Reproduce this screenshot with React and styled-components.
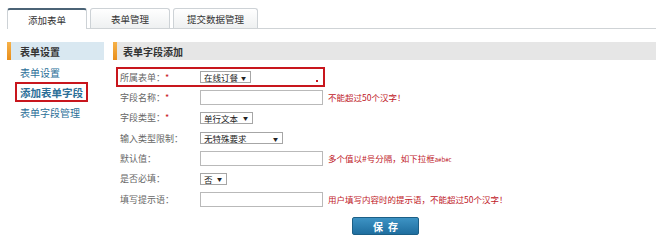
import React from 'react';
import styled, { createGlobalStyle } from 'styled-components';

const GlobalStyle = createGlobalStyle`
  html, body {
    margin: 0;
    padding: 0;
    background: #ffffff;
    font-family: "Noto Sans CJK SC", "Liberation Sans", sans-serif;
  }
`;

const Page = styled.div`
  width: 659px;
  height: 252px;
  overflow: hidden;
  box-sizing: border-box;
  padding: 7px 3px 0 7px;
`;

const TabBar = styled.div`
  display: flex;
  align-items: flex-end;
  gap: 3px;
  height: 21px;
  border-bottom: 1px solid #cfd3d6;
`;

const Tab = styled.div`
  width: ${(p) => p.width}px;
  height: ${(p) => (p.active ? 21 : 20)}px;
  box-sizing: border-box;
  display: flex;
  align-items: center;
  justify-content: center;
  font-size: 9.5px;
  color: #333;
  border: 1px solid #cdd2d6;
  border-top: ${(p) => (p.active ? '2px solid #4b6376' : '1px solid #cdd2d6')};
  border-bottom: none;
  border-radius: 3px 3px 0 0;
  background: ${(p) => (p.active ? '#ffffff' : 'linear-gradient(#ffffff, #eef0f1)')};
  margin-bottom: ${(p) => (p.active ? '-1px' : '0')};
`;

const Body = styled.div`
  display: flex;
  gap: 9px;
  margin-top: 13px;
`;

const Side = styled.div`
  width: 97px;
`;

const Main = styled.div`
  flex: 1;
`;

const Heading = styled.div`
  height: 18px;
  display: flex;
  align-items: center;
  background: ${(p) => p.bg};
  font-size: 10px;
  font-weight: bold;
  color: #333;
  &::before {
    content: '';
    width: 4px;
    height: 100%;
    background: linear-gradient(#f6b24a, #e98e1a);
    margin-right: ${(p) => p.gap}px;
  }
`;

const SideList = styled.div`
  display: flex;
  flex-direction: column;
  padding-top: 2px;
`;

const SideLink = styled.div`
  height: 20px;
  display: flex;
  align-items: center;
  margin-left: 8px;
  width: 73px;
  box-sizing: border-box;
  padding-left: 3px;
  font-size: ${(p) => (p.current ? 10.5 : 10)}px;
  font-weight: ${(p) => (p.current ? 'bold' : 'normal')};
  color: #2b6f98;
  border: 2px solid ${(p) => (p.current ? '#c8161d' : 'transparent')};
`;

const Form = styled.div`
  padding-top: 7px;
`;

const Row = styled.div`
  height: 20.33px;
  box-sizing: border-box;
  display: flex;
  align-items: center;
  margin-left: 3px;
  padding-left: 2px;
  width: ${(p) => (p.boxed ? '209px' : 'auto')};
  border: 2px solid ${(p) => (p.boxed ? '#c8161d' : 'transparent')};
`;

const Label = styled.div`
  width: 80px;
  flex-shrink: 0;
  font-size: 9px;
  color: #666;
  display: flex;
  align-items: center;
`;

const Star = styled.span`
  color: #c8161d;
  margin-left: 0;
  font-size: 9px;
`;

const TextBox = styled.div`
  width: 123px;
  height: 15px;
  box-sizing: border-box;
  border: 1px solid #b9b9b9;
  background: #fff;
`;

const Select = styled.div`
  width: ${(p) => p.width}px;
  height: 12px;
  box-sizing: border-box;
  border: 1px solid #a6a6a6;
  background: #fff;
  display: flex;
  align-items: center;
  justify-content: space-between;
  padding: 0 4px 0 3px;
  font-size: 8.5px;
  color: #222;
  &::after {
    content: '▼';
    font-size: 5px;
    color: #222;
  }
`;

const Hint = styled.div`
  margin-left: 5px;
  font-size: 8.5px;
  color: #c0181f;
  white-space: nowrap;
`;

const Small = styled.span`
  font-size: 6px;
`;

const Dot = styled.span`
  width: 2px;
  height: 2px;
  background: #c8161d;
  margin-left: auto;
  margin-right: 5px;
  align-self: flex-end;
  margin-bottom: 3px;
`;

const SaveButton = styled.button`
  display: block;
  margin: 8px 0 0 239px;
  width: 67px;
  height: 18px;
  padding: 0;
  border: 1px solid #1c5f86;
  border-radius: 2px;
  background: linear-gradient(#3d93c4, #1f6e9f);
  color: #fff;
  font-family: inherit;
  font-size: 10px;
  font-weight: bold;
  letter-spacing: 5px;
  text-indent: 5px;
`;

const fields = [
  { label: '所属表单：', required: true, select: '在线订餐', width: 51, boxed: true },
  { label: '字段名称：', required: true, input: true, hint: '不能超过50个汉字！' },
  { label: '字段类型：', required: true, select: '单行文本', width: 53 },
  { label: '输入类型限制：', select: '无特殊要求', width: 83 },
  { label: '默认值：', input: true, hint: 'default' },
  { label: '是否必填：', select: '否', width: 27 },
  { label: '填写提示语：', input: true, hint: '用户填写内容时的提示语，不能超过50个汉字！' },
];

export default function App() {
  return (
    <>
      <GlobalStyle />
      <Page>
        <TabBar>
          <Tab active width={80}>添加表单</Tab>
          <Tab width={80}>表单管理</Tab>
          <Tab width={85}>提交数据管理</Tab>
        </TabBar>
        <Body>
          <Side>
            <Heading bg="#d9e8f1" gap={9}>表单设置</Heading>
            <SideList>
              <SideLink>表单设置</SideLink>
              <SideLink current>添加表单字段</SideLink>
              <SideLink>表单字段管理</SideLink>
            </SideList>
          </Side>
          <Main>
            <Heading bg="#e6e6e6" gap={6}>表单字段添加</Heading>
            <Form>
              {fields.map((f) => (
                <Row key={f.label} boxed={f.boxed}>
                  <Label>
                    {f.label}
                    {f.required && <Star>*</Star>}
                  </Label>
                  {f.input ? <TextBox /> : <Select width={f.width}>{f.select}</Select>}
                  {f.hint === 'default' && (
                    <Hint>
                      多个值以#号分隔，如下拉框<Small>a#b#c</Small>
                    </Hint>
                  )}
                  {f.hint && f.hint !== 'default' && <Hint>{f.hint}</Hint>}
                  {f.boxed && <Dot />}
                </Row>
              ))}
            </Form>
            <SaveButton>保存</SaveButton>
          </Main>
        </Body>
      </Page>
    </>
  );
}
